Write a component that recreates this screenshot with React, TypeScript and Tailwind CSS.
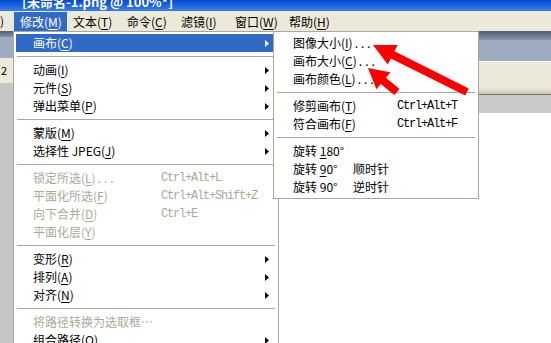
import React from "react";

type Item =
  | "sep"
  | {
      label: string;
      k?: string;
      dots?: boolean;
      shortcut?: string;
      sub?: boolean;
      disabled?: boolean;
      active?: boolean;
    };

const MAIN: Item[] = [
  { label: "画布", k: "C", sub: true, active: true },
  "sep",
  { label: "动画", k: "I", sub: true },
  { label: "元件", k: "S", sub: true },
  { label: "弹出菜单", k: "P", sub: true },
  "sep",
  { label: "蒙版", k: "M", sub: true },
  { label: "选择性 JPEG", k: "J", sub: true },
  "sep",
  { label: "锁定所选", k: "L", dots: true, shortcut: "Ctrl+Alt+L", disabled: true },
  { label: "平面化所选", k: "F", shortcut: "Ctrl+Alt+Shift+Z", disabled: true },
  { label: "向下合并", k: "D", shortcut: "Ctrl+E", disabled: true },
  { label: "平面化层", k: "Y", disabled: true },
  "sep",
  { label: "变形", k: "R", sub: true },
  { label: "排列", k: "A", sub: true },
  { label: "对齐", k: "N", sub: true },
  "sep",
  { label: "将路径转换为选取框…", disabled: true },
  { label: "组合路径", k: "O", sub: true },
];

const CANVAS: Item[] = [
  { label: "图像大小", k: "I", dots: true },
  { label: "画布大小", k: "C", dots: true },
  { label: "画布颜色", k: "L", dots: true },
  "sep",
  { label: "修剪画布", k: "T", shortcut: "Ctrl+Alt+T" },
  { label: "符合画布", k: "F", shortcut: "Ctrl+Alt+F" },
];

const Mnemonic = ({ k }: { k: string }) => (
  <>
    (<span className="underline underline-offset-2">{k}</span>)
  </>
);

const Arrow = ({ white }: { white?: boolean }) => (
  <svg width="4" height="7" className="absolute right-[7px] top-[6px]">
    <path d="M0 0L4 3.5L0 7z" fill={white ? "#fff" : "#000"} />
  </svg>
);

const Sep = () => (
  <div className="mx-[3px] pt-[4px] pb-[4px]">
    <div className="h-px bg-[#aca899]" />
  </div>
);

const Row = ({ item, shortcutLeft }: { item: Exclude<Item, "sep">; shortcutLeft: string }) => (
  <div
    className={`relative mx-[2px] h-[18px] pl-[17px] flex items-center whitespace-nowrap leading-[18px] ${
      item.active ? "bg-[#316ac5] text-white" : item.disabled ? "text-[#aca899]" : "text-black"
    }`}
  >
    <span>
      {item.label}
      {item.k && <Mnemonic k={item.k} />}
      {item.dots && <span className="tracking-[3px] pl-[2px]">...</span>}
    </span>
    {item.shortcut && (
      <span
        className={`absolute ${shortcutLeft} top-0 font-['Liberation_Mono',monospace] text-[12px] tracking-[-1.2px]`}
      >
        {item.shortcut}
      </span>
    )}
    {item.sub && <Arrow white={item.active} />}
  </div>
);

export default function App() {
  return (
    <div className="relative w-[551px] h-[343px] overflow-hidden bg-white font-['Noto_Sans_CJK_SC',sans-serif] text-[12px] text-black flex flex-col">
      {/* title bar */}
      <div className="h-[11px] shrink-0 overflow-hidden bg-linear-to-b from-[#0446d0] to-[#3580ee]">
        <div className="pl-[22px] -mt-[5px] text-white font-bold text-[13px] leading-[13px] whitespace-nowrap">
          [未命名-1.png @ 100%*]
        </div>
      </div>

      {/* menu bar */}
      <div className="h-[20px] shrink-0 flex bg-[#ece9d8] leading-[19px] whitespace-nowrap">
        <div className="w-[14px]">)</div>
        <div className="w-[53px] h-[19px] mt-px pl-[6px] bg-[#316ac5] text-white">
          修改<Mnemonic k="M" />
        </div>
        {[
          ["文本", "T"],
          ["命令", "C"],
          ["滤镜", "I"],
          ["窗口", "W"],
          ["帮助", "H"],
        ].map(([l, k]) => (
          <div key={l} className="w-[54px] pl-[6px] pt-px">
            {l}
            <Mnemonic k={k} />
          </div>
        ))}
      </div>

      {/* workspace behind the menus */}
      <div className="flex flex-1">
        <div className="w-[14px] flex flex-col">
          <div className="h-[6px] bg-linear-to-b from-[#4f5e74] to-[#8694a9]" />
          <div className="h-[21px] bg-[#9eacc1]" />
          <div className="h-[25px] bg-[#ece9d8] text-[11px] leading-[25px] pl-px">2</div>
          <div className="flex-1 bg-[#c6c6c6]" />
        </div>
        <div className="flex-1 flex flex-col">
          <div className="h-[9px] bg-linear-to-b from-[#4f5e74] to-[#8997ac]" />
          <div className="h-[21px] bg-[#9eacc1]" />
          <div className="h-px bg-white" />
          <div className="h-[26px] bg-[#ece9d8]" />
          <div className="h-[6px] bg-linear-to-b from-[#ece9d8] to-[#c9c6b6]" />
          <div className="h-px bg-[#716f64]" />
          <div className="h-[18px] bg-[#c9c9c9]" />
          <div className="flex-1 bg-white" />
        </div>
      </div>

      {/* 修改 dropdown */}
      <div className="absolute left-[13px] top-[31px] w-[266px] border border-[#aca899] bg-white py-[2px]">
        {MAIN.map((it, i) => (it === "sep" ? <Sep key={i} /> : <Row key={i} item={it} shortcutLeft="left-[145px]" />))}
      </div>

      {/* 画布 submenu */}
      <div className="absolute left-[273px] top-[31px] w-[206px] border border-[#aca899] bg-white py-[2px]">
        {CANVAS.map((it, i) => (it === "sep" ? <Sep key={i} /> : <Row key={i} item={it} shortcutLeft="left-[121px]" />))}
        <Sep />
        {[
          ["180°", "1", ""],
          ["90°", "9", "顺时针"],
          ["90°", "", "逆时针"],
        ].map(([deg, u, dir], i) => (
          <div key={i} className="mx-[2px] h-[18px] pl-[17px] flex items-center whitespace-nowrap leading-[18px]">
            <span className="w-[60px]">
              旋转{" "}
              {u ? (
                <>
                  <span className="underline underline-offset-2">{u}</span>
                  {deg.slice(1)}
                </>
              ) : (
                deg
              )}
            </span>
            <span>{dir}</span>
          </div>
        ))}
      </div>

      {/* red annotation arrows */}
      <svg className="absolute inset-0 pointer-events-none" width="551" height="343">
        <polygon
          fill="#ff0000"
          points="373,45 397.6,45 394.5,51.2 468.8,88.4 465.2,95.6 390.9,58.4 387.8,64.6"
        />
        <polygon
          fill="#ff0000"
          points="368,68 390.4,72.3 386,77.7 399.6,88.9 394.4,95.1 380.8,83.9 376.4,89.3"
        />
      </svg>
    </div>
  );
}
